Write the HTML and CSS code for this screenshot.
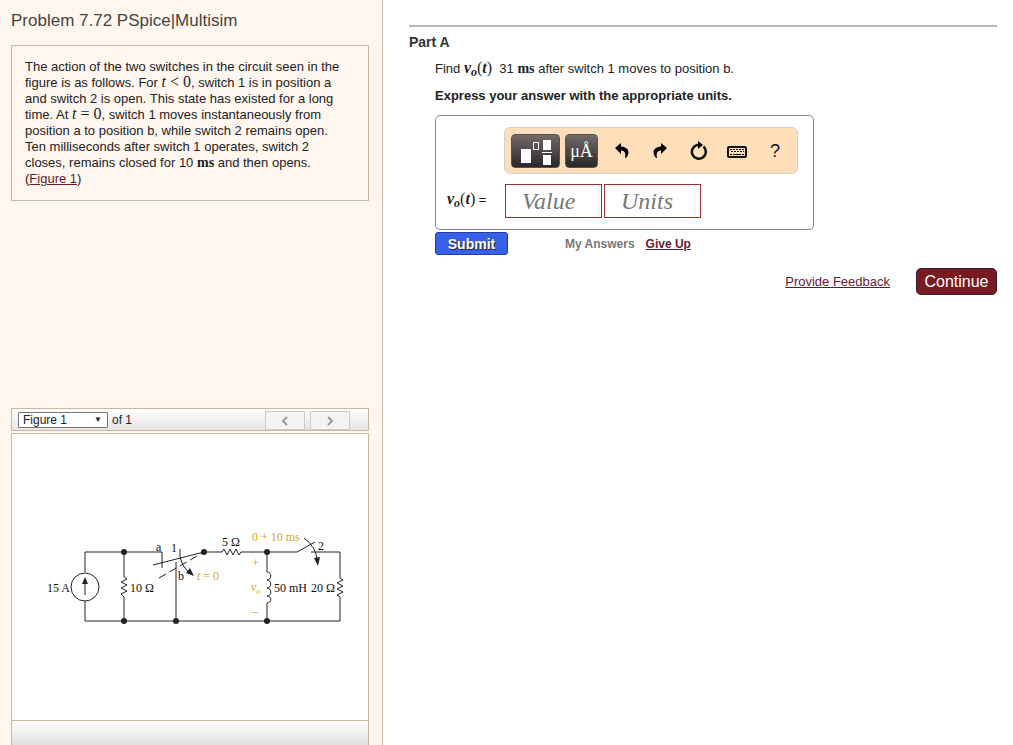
FILE: index.html
```html
<!DOCTYPE html>
<html lang="en">

<head>
    <meta charset="utf-8">
    <title>Problem 7.72</title>
    <link rel="stylesheet" href="styles.css">
</head>

<body>
    <div class="page">
        <!-- problem text and figure -->
        <div class="side">
            <h1 class="title">Problem 7.72 PSpice|Multisim</h1>
            <div class="problem">
                The action of the two switches in the circuit seen in the figure is as follows. For <span class="math"><i>t</i> &lt; 0</span>, switch 1 is in position a and switch 2 is open. This state has existed for a long time. At <span class="math"><i>t</i> = 0</span>, switch 1 moves instantaneously from position a to position b, while switch 2 remains open. Ten milliseconds after switch 1 operates, switch 2 closes, remains closed for 10 <span class="unit">ms</span> and then opens.<br>(<a href="#figure">Figure 1</a>)
            </div>
            <div class="figure" id="figure">
                <div class="fig-bar">
                    <div class="pick">
                        <select id="fig" aria-label="Figure">
                            <option>Figure 1</option>
                        </select>
                    </div>
                    <label for="fig">of 1</label>
                    <div class="nav">
                        <button type="button" aria-label="Previous" disabled><svg width="8" height="10" viewBox="0 0 8 10"><path d="M6 1L2 5l4 4" /></svg></button>
                        <button type="button" aria-label="Next" disabled><svg width="8" height="10" viewBox="0 0 8 10"><path d="M2 1l4 4-4 4" /></svg></button>
                    </div>
                </div>
                <div class="fig-box">
                    <svg class="circuit" viewBox="0 0 310 100" width="310" height="100">
                        <!-- wires -->
                        <g class="wire">
                            <path d="M50 45V25H127V41M50 74V94H305V70M89 25V50M89 70V94M141 94V35" />
                            <path d="M169 25H187M206 25H262L280 15M276 25H305V51M232 25V45M232 76V94" />
                            <path d="M118 38L169 25M145 22V30" />
                            <path d="M124 51L169 25" stroke-dasharray="8 4" />
                            <!-- resistors and inductor -->
                            <path d="M89 50l3 2-6 3 6 3-6 3 6 3-6 3 3 3" />
                            <path d="M187 25l2-3 3 6 3-6 3 6 3-6 3 6 2-3" />
                            <path d="M305 51l3 2-6 3 6 3-6 3 6 3-6 3 3 2" />
                            <path d="M232 45c5 0 5 8 0 8c5 0 5 8 0 8c5 0 5 8 0 8c5 0 5 7 0 7" />
                            <!-- source -->
                            <circle cx="50" cy="60" r="14" />
                            <path d="M50 68V55" />
                            <!-- switch arrows -->
                            <path d="M145 30Q148 41 154 45" />
                            <path d="M269 11Q281 20 282 32" />
                        </g>
                        <g class="solid">
                            <path d="M50 50l-3 7h6zM159 49l-8-3 4-5zM283 39l-4-8 6-1z" />
                            <circle cx="89" cy="25" r="3" />
                            <circle cx="89" cy="94" r="3" />
                            <circle cx="141" cy="94" r="3" />
                            <circle cx="169" cy="25" r="3" />
                            <circle cx="232" cy="25" r="3" />
                            <circle cx="232" cy="94" r="3" />
                        </g>
                        <g class="label">
                            <text x="12" y="65">15 A</text>
                            <text x="95" y="65">10 Ω</text>
                            <text x="121" y="24">a</text>
                            <text x="136" y="25">1</text>
                            <text x="143" y="53">b</text>
                            <text x="187" y="19">5 Ω</text>
                            <text x="283" y="23">2</text>
                            <text x="239" y="65">50 mH</text>
                            <text x="276" y="65">20 Ω</text>
                        </g>
                        <g class="label gold">
                            <text x="162" y="53"><tspan class="it">t</tspan> = 0</text>
                            <text x="217" y="14">0 + 10 ms</text>
                            <text x="217" y="40">+</text>
                            <text x="216" y="64"><tspan class="it">v</tspan><tspan class="it sub" dy="3">o</tspan></text>
                            <text x="217" y="88">–</text>
                        </g>
                    </svg>
                </div>
                <div class="fig-foot"></div>
            </div>
        </div>

        <!-- question -->
        <div class="main">
            <h2 class="part">Part A</h2>
            <div class="question">
                <p>Find <span class="math"><b><i>v<sub>o</sub></i></b>(<b><i>t</i></b>)</span> &nbsp;31 <span class="unit">ms</span> after switch 1 moves to position b.</p>
                <p><b>Express your answer with the appropriate units.</b></p>
                <form class="answer">
                    <div class="tools">
                        <button type="button" class="dark wide" aria-label="Templates">
                            <svg width="34" height="28" viewBox="0 0 34 28">
                                <path fill="#fff" d="M2 12h10v14H2zM24 3h8v10h-8zM24 18h8v10h-8zM23 15h10v1H23z" />
                                <path fill="none" stroke="#fff" d="M14.500 5.500h5v7h-5z" />
                            </svg>
                        </button>
                        <button type="button" class="dark">μÅ</button>
                        <button type="button" class="icon" aria-label="Undo"><svg width="16" height="16" viewBox="0 0 16 16"><path d="M7 0L1 5l6 6V7.500c4 0 5 3 4 7.500l1 0c5-6 2-11-5-11.500z" /></svg></button>
                        <button type="button" class="icon" aria-label="Redo"><svg width="16" height="16" viewBox="0 0 16 16"><path d="M9 0l6 5-6 6V7.500c-4 0-5 3-4 7.500l-1 0C-1 9 2 4 9 3.500z" /></svg></button>
                        <button type="button" class="icon" aria-label="Reset"><svg width="18" height="20" viewBox="0 0 18 20"><path fill="none" stroke="#111" stroke-width="2.500" d="M13.500 5.500A7 7 0 1 1 7 4H9" /><path d="M8 0l5 4-5 4z" /></svg></button>
                        <button type="button" class="icon" aria-label="Keyboard"><svg class="keys" width="20" height="12" viewBox="0 0 20 12"><rect x="1" y="1" width="18" height="10" rx="1" fill="none" stroke="#111" stroke-width="2" /><path fill="none" stroke="#111" stroke-width="1" stroke-dasharray="2 1" d="M3 3.500h14M4 5.500h13" /><path d="M3 8h2v1H3zM6 8h8v1H6zM15 8h2v1h-2z" /></svg></button>
                        <button type="button" class="icon help">?</button>
                    </div>
                    <div class="fields">
                        <label class="name" for="value"><span class="math"><b><i>v<sub>o</sub></i></b>(<b><i>t</i></b>)</span> =</label>
                        <input type="text" id="value" placeholder="Value">
                        <input type="text" id="units" placeholder="Units" aria-label="Units">
                    </div>
                </form>
                <div class="actions">
                    <button type="button" class="submit">Submit</button>
                    <span class="mine">My Answers</span>
                    <a href="#giveup">Give Up</a>
                </div>
            </div>
            <div class="bottom">
                <a href="#feedback">Provide Feedback</a>
                <button type="button" class="continue">Continue</button>
            </div>
        </div>
    </div>
</body>

</html>
```

FILE: styles.css
```css
* {
    box-sizing: border-box;
}

body {
    margin: 0;
    font: 13px/16px "Liberation Sans", Arial, sans-serif;
    color: #222;
    background-color: #fff;
}

button,
input,
select {
    font-family: inherit;
    padding: 0;
}

a {
    color: #651c32;
}

.page {
    display: flex;
    min-height: 100vh;
}

/* left column */
.side {
    flex: none;
    width: 383px;
    display: flex;
    flex-direction: column;
    padding: 11px 13px 0 11px;
    background-color: #fff7ef;
    border-right: 1px solid #c9b8a6;
}

.title {
    margin: 0 0 14px;
    font-size: 17px;
    line-height: 20px;
    font-weight: normal;
    color: #444;
}

.problem {
    padding: 13px 20px 13px 13px;
    border: 1px solid #c9b8a6;
}

.math,
.unit {
    font-family: "Liberation Serif", "Times New Roman", serif;
    font-size: 16px;
    line-height: 0;
    white-space: nowrap;
}

.unit {
    font-size: 14px;
    font-weight: bold;
}

.math sub {
    font-size: 12px;
    line-height: 0;
    vertical-align: -3px;
}

.figure {
    margin-top: auto;
}

.fig-bar {
    display: flex;
    align-items: center;
    gap: 4px;
    height: 23px;
    padding: 0 18px 0 6px;
    border: 1px solid #c9b8a6;
    background-image: linear-gradient(#fff, #e4e4e4);
    font-size: 12px;
}

.pick {
    position: relative;
}

.pick::after {
    content: "▼";
    position: absolute;
    right: 6px;
    top: 0;
    font-size: 8px;
    pointer-events: none;
}

.pick select {
    appearance: none;
    display: block;
    width: 90px;
    height: 16px;
    padding-left: 4px;
    border: 1px solid #777;
    border-radius: 1px;
    background-color: #fff;
    color: #222;
    font-size: 12px;
    line-height: 14px;
}

.nav {
    display: flex;
    gap: 5px;
    margin-left: auto;
    align-self: flex-end;
}

.nav button {
    width: 40px;
    height: 19px;
    border: 1px solid #ccc;
    background-color: #f3f3f3;
    line-height: 0;
}

.nav path {
    fill: none;
    stroke: #999;
    stroke-width: 2;
}

.fig-box {
    display: flex;
    align-items: center;
    justify-content: center;
    height: 288px;
    margin-top: 2px;
    border: 1px solid #c9b8a6;
    background-color: #fff;
}

.fig-foot {
    height: 24px;
    border: solid #c9b8a6;
    border-width: 0 1px;
    background-image: linear-gradient(#fff, #e0e0e0);
}

.circuit {
    max-width: 100%;
}

.wire {
    fill: none;
    stroke: #222;
    stroke-width: 1;
}

.solid {
    fill: #222;
}

.label {
    font: 12px "Liberation Serif", "Times New Roman", serif;
    fill: #111;
}

.gold {
    fill: #d9a520;
}

.it {
    font-style: italic;
}

.sub {
    font-size: 8px;
}

/* right column */
.main {
    flex: 1;
    padding: 25px 16px 0 26px;
}

.part {
    margin: 0;
    padding-top: 7px;
    border-top: 2px solid #b8b8b8;
    font-size: 14px;
    line-height: 16px;
    color: #333;
}

.question {
    padding-left: 26px;
}

.question p {
    margin: 11px 0;
}

.answer {
    width: fit-content;
    margin-top: 10px;
    padding: 11px 15px;
    border: 1px solid #888;
    border-radius: 5px;
}

.tools {
    display: flex;
    align-items: center;
    width: 294px;
    height: 47px;
    margin: 0 0 10px 53px;
    padding: 0 3px 0 6px;
    border: 1px solid #d0d0d0;
    border-radius: 6px;
    background-color: #ffdfba;
}

.dark {
    width: 33px;
    height: 34px;
    margin-right: 5px;
    border: 1px solid #555;
    border-radius: 4px;
    background-image: linear-gradient(#746a6a, #2a2727);
    color: #fff;
    font-family: "Liberation Serif", "Times New Roman", serif;
    font-size: 18px;
    line-height: 0;
}

.wide {
    width: 49px;
}

.icon {
    flex: 1;
    border: 0;
    background: none;
    line-height: 0;
}

.keys {
    margin-top: 3px;
}

.help {
    font-size: 18px;
    color: #111;
}

.fields {
    display: flex;
    gap: 2px;
}

.name {
    width: 56px;
    margin-left: -4px;
    padding-top: 8px;
    white-space: nowrap;
}

.fields input {
    width: 97px;
    height: 34px;
    padding-left: 16px;
    border: 1px solid #933;
    font: italic 24px "Liberation Serif", "Times New Roman", serif;
}

.fields input::placeholder {
    color: #777;
}

.actions {
    display: flex;
    align-items: center;
    margin-top: 2px;
    font-size: 12px;
    font-weight: bold;
}

.submit {
    width: 73px;
    height: 23px;
    margin-right: 57px;
    border: 1px solid #2340a0;
    border-radius: 3px;
    background-color: #3860e8;
    color: #fff;
    font-size: 14px;
    font-weight: bold;
    text-shadow: 1px 1px 1px #222;
}

.mine {
    margin-right: 11px;
    color: #777;
}

.bottom {
    display: flex;
    align-items: center;
    justify-content: flex-end;
    gap: 26px;
    margin-top: 13px;
}

.continue {
    width: 81px;
    height: 27px;
    border: 1px solid #3a1838;
    border-radius: 5px;
    background-color: #761c20;
    color: #fff;
    font-size: 16px;
}
```
